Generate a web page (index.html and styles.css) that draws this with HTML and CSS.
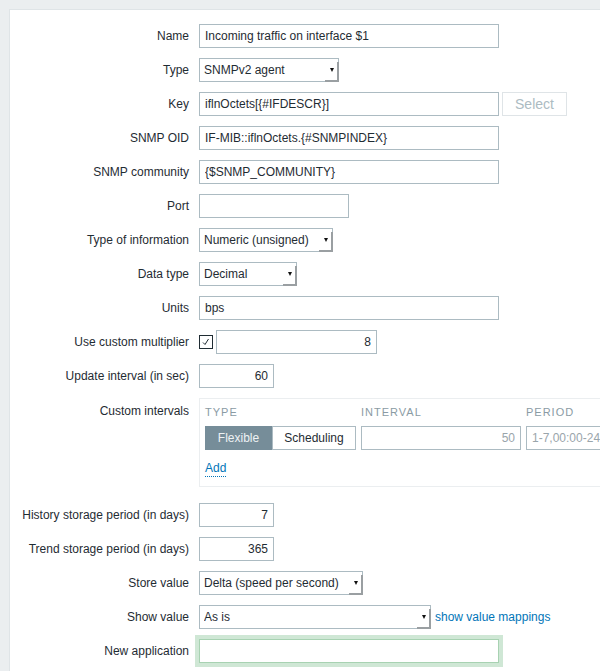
FILE: index.html
```html
<!DOCTYPE html>
<html lang="en">
<head>
  <meta charset="UTF-8">
  <title>Item prototype</title>
  <link rel="stylesheet" href="styles.css">
</head>
<body>
  <div class="panel">
    <div class="row">
      <label>Name</label>
      <input class="w-300" type="text" value="Incoming traffic on interface $1">
    </div>
    <div class="row">
      <label>Type</label>
      <span class="select w-140"><select><option>SNMPv2 agent</option></select></span>
    </div>
    <div class="row">
      <label>Key</label>
      <input class="w-300" type="text" value="iflnOctets[{#IFDESCR}]">
      <button class="btn-grey" disabled>Select</button>
    </div>
    <div class="row">
      <label>SNMP OID</label>
      <input class="w-300" type="text" value="IF-MIB::iflnOctets.{#SNMPINDEX}">
    </div>
    <div class="row">
      <label>SNMP community</label>
      <input class="w-300" type="text" value="{$SNMP_COMMUNITY}">
    </div>
    <div class="row">
      <label>Port</label>
      <input class="w-150" type="text" value="">
    </div>
    <div class="row">
      <label>Type of information</label>
      <span class="select w-134"><select><option>Numeric (unsigned)</option></select></span>
    </div>
    <div class="row">
      <label>Data type</label>
      <span class="select w-98"><select><option>Decimal</option></select></span>
    </div>
    <div class="row">
      <label>Units</label>
      <input class="w-300" type="text" value="bps">
    </div>
    <div class="row">
      <label>Use custom multiplier</label>
      <span class="checkbox">
        <svg width="14" height="14" viewBox="0 0 14 14"><polyline points="4,7.5 6,9.5 9.5,4" fill="none" stroke="#1f2c33" stroke-width="1"/></svg>
      </span>
      <input class="w-161 num" type="text" value="8">
    </div>
    <div class="row">
      <label>Update interval (in sec)</label>
      <input class="w-75 num" type="text" value="60">
    </div>
    <div class="row top">
      <label class="label-top">Custom intervals</label>
      <div class="intervals">
        <table>
          <thead>
            <tr><th>Type</th><th>Interval</th><th>Period</th></tr>
          </thead>
          <tbody>
            <tr>
              <td>
                <div class="radio-group">
                  <span class="radio on">Flexible</span>
                  <span class="radio">Scheduling</span>
                </div>
              </td>
              <td><input class="w-160 num" type="text" placeholder="50"></td>
              <td><input class="w-160" type="text" placeholder="1-7,00:00-24:00"></td>
            </tr>
          </tbody>
        </table>
        <a class="link-dotted" href="#">Add</a>
      </div>
    </div>
    <div class="row">
      <label>History storage period (in days)</label>
      <input class="w-75 num" type="text" value="7">
    </div>
    <div class="row">
      <label>Trend storage period (in days)</label>
      <input class="w-75 num" type="text" value="365">
    </div>
    <div class="row">
      <label>Store value</label>
      <span class="select w-164"><select><option>Delta (speed per second)</option></select></span>
    </div>
    <div class="row">
      <label>Show value</label>
      <span class="select w-232"><select><option>As is</option></select></span>
      <a class="link" href="#">show value mappings</a>
    </div>
    <div class="row">
      <label>New application</label>
      <input class="w-300 focus" type="text" value="">
    </div>
  </div>
</body>
</html>
```

FILE: styles.css
```css
body {
  margin: 0;
  background: #ebeef0;
  font-family: "Liberation Sans", Arial, sans-serif;
  font-size: 12px;
  color: #1f2c33;
}

.panel {
  width: 780px;
  margin: 9px 0 0 9px;
  padding: 14px 0 20px;
  background: #fff;
  border: 1px solid #dfe4e7;
}

.row {
  display: flex;
  align-items: center;
  margin-bottom: 10px;
}

.row.top {
  align-items: flex-start;
  margin-bottom: 16px;
}

.row label {
  width: 179px;
  margin-right: 10px;
  text-align: right;
  line-height: 14px;
  white-space: nowrap;
}

.row label.label-top {
  padding-top: 6px;
}

input {
  height: 24px;
  box-sizing: border-box;
  border: 1px solid #acbbc2;
  padding: 0 5px;
  font-family: inherit;
  font-size: 12px;
  color: #1f2c33;
  background: #fff;
  outline: none;
}

input::placeholder {
  color: #9aa5ab;
}

input.num {
  text-align: right;
}

input.focus {
  border-color: #a8d2b2;
  box-shadow: 0 0 0 4px #cfe7d5;
}

.w-75 { width: 75px; }
.w-150 { width: 150px; }
.w-160 { width: 160px; }
.w-161 { width: 161px; }
.w-300 { width: 300px; }

/* native-looking select */
.select {
  position: relative;
  display: inline-block;
  height: 24px;
}

.select select {
  width: 100%;
  height: 24px;
  box-sizing: border-box;
  appearance: none;
  -webkit-appearance: none;
  border: 1px solid #acbbc2;
  border-radius: 0;
  padding: 0 18px 0 4px;
  background: #fff;
  font-family: inherit;
  font-size: 12px;
  color: #1f2c33;
}

.select::before {
  content: "";
  position: absolute;
  right: 0;
  bottom: 0;
  width: 14px;
  height: 20px;
  border-right: 2px solid #9a9fa2;
  border-bottom: 2px solid #9a9fa2;
  box-sizing: border-box;
}

.select::after {
  content: "";
  position: absolute;
  right: 5px;
  top: 10px;
  border-left: 2.5px solid transparent;
  border-right: 2.5px solid transparent;
  border-top: 4px solid #111;
}

.w-98 { width: 98px; }
.w-134 { width: 134px; }
.w-140 { width: 140px; }
.w-164 { width: 164px; }
.w-232 { width: 232px; }

.btn-grey {
  height: 24px;
  width: 65px;
  margin-left: 3px;
  border: 1px solid #dfe4e7;
  background: #fff;
  color: #acbbc2;
  font-family: inherit;
  font-size: 14px;
}

.checkbox {
  width: 14px;
  height: 14px;
  box-sizing: border-box;
  border: 1px solid #1f2c33;
  margin-right: 3px;
  display: flex;
}

.checkbox svg {
  margin: -1px;
}

.link {
  margin-left: 4px;
  color: #0275b8;
  text-decoration: none;
}

.link-dotted {
  display: inline-block;
  margin-top: 11px;
  line-height: 15px;
  color: #0275b8;
  text-decoration: none;
  border-bottom: 1px dotted #0275b8;
}

/* custom intervals block */
.intervals {
  width: 560px;
  border: 1px solid #ebeef0;
  padding: 5px 5px 9px;
}

.intervals table {
  border-collapse: collapse;
}

.intervals th {
  padding: 0 5px 6px 0;
  line-height: 16px;
  text-align: left;
  font-weight: normal;
  font-size: 11px;
  letter-spacing: 1px;
  text-transform: uppercase;
  color: #8a9ba4;
}

.intervals td {
  padding: 0 5px 0 0;
  vertical-align: top;
}

.radio-group {
  display: flex;
  width: 151px;
}

.radio {
  height: 24px;
  box-sizing: border-box;
  line-height: 22px;
  border: 1px solid #acbbc2;
  text-align: center;
  color: #1f2c33;
  background: #fff;
  width: 84px;
}

.radio.on {
  width: 67px;
  background: #768d99;
  border-color: #768d99;
  color: #eef2f4;
}
```
